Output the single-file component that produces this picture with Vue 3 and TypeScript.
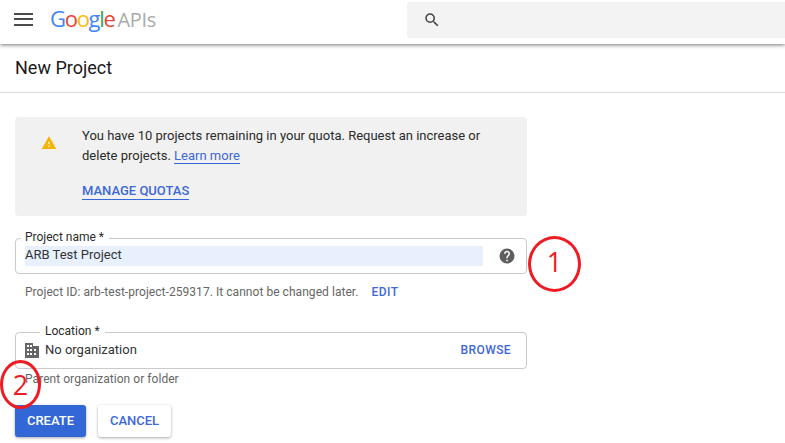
<script setup lang="ts">
const logo: { c: string; k: string }[] = [
  { c: 'G', k: 'b' }, { c: 'o', k: 'r' }, { c: 'o', k: 'y' }, { c: 'g', k: 'b' }, { c: 'l', k: 'g' }, { c: 'e', k: 'r' },
]
</script>

<template>
  <div class="page">
    <header class="topbar">
      <button class="menu" aria-label="Menu"><span></span><span></span><span></span></button>
      <div class="logo">
        <span v-for="(l, i) in logo" :key="i" :class="l.k">{{ l.c }}</span>
        <span class="apis">APIs</span>
      </div>
      <div class="search">
        <svg width="18" height="18" viewBox="0 0 24 24"><path fill="#444" d="M15.5 14h-.79l-.28-.27A6.47 6.47 0 0 0 16 9.5 6.5 6.5 0 1 0 9.5 16c1.61 0 3.09-.59 4.23-1.57l.27.28v.79l5 4.99L20.49 19l-4.99-5zm-6 0C7.01 14 5 11.99 5 9.5S7.01 5 9.5 5 14 7.01 14 9.5 11.99 14 9.5 14z"/></svg>
      </div>
    </header>

    <div class="title-row"><h1>New Project</h1></div>

    <main class="content">
      <section class="notice">
        <svg class="warn" width="16" height="16" viewBox="0 0 24 24"><path fill="#f4b400" d="M1 21h22L12 2 1 21zm12-3h-2v-2h2v2zm0-4h-2v-4h2v4z"/></svg>
        <div class="notice-body">
          <p>You have 10 projects remaining in your quota. Request an increase or delete projects. <a>Learn more</a></p>
          <a class="manage">MANAGE QUOTAS</a>
        </div>
      </section>

      <div class="field first">
        <span class="legend">Project name *</span>
        <div class="value"><span>ARB Test Project</span></div>
        <svg class="help" width="18" height="18" viewBox="0 0 24 24"><path fill="#5f5f5f" d="M12 2a10 10 0 1 0 0 20 10 10 0 0 0 0-20zm1 17h-2v-2h2v2zm2.07-7.75-.9.92C13.45 12.9 13 13.5 13 15h-2v-.5c0-1.1.45-2.1 1.17-2.83l1.24-1.26c.37-.36.59-.86.59-1.41 0-1.1-.9-2-2-2s-2 .9-2 2H8c0-2.21 1.79-4 4-4s4 1.79 4 4c0 .88-.36 1.68-.93 2.25z"/></svg>
      </div>
      <p class="hint id">Project ID: arb-test-project-259317. It cannot be changed later.<a class="edit">EDIT</a></p>

      <div class="field second">
        <span class="legend loc">Location *</span>
        <svg class="org" width="14" height="15" viewBox="0 0 14 15"><path fill="#666" fill-rule="evenodd" d="M0 0h8v3h6v12H0zM2 2v2h2V2zM5 2v2h2V2zM2 6v2h2V6zM5 6v2h2V6zM9 6v2h2V6zM2 10v2h2v-2zM5 10v2h2v-2zM9 10v2h2v-2z"/></svg>
        <span class="org-text">No organization</span>
        <a class="browse">BROWSE</a>
      </div>
      <p class="hint parent">Parent organization or folder</p>

      <div class="actions">
        <button class="btn primary">CREATE</button>
        <button class="btn secondary">CANCEL</button>
      </div>
    </main>

    <div class="mark one">1</div>
    <div class="mark two">2</div>
  </div>
</template>

<style scoped>
.page { position: relative; width: 785px; height: 443px; overflow: hidden; background: #fff; font-family: Roboto, "Liberation Sans", sans-serif; color: #202124; }
.topbar { height: 44px; display: flex; align-items: center; position: relative; box-shadow: 0 1px 4px rgba(0,0,0,.55); background: #fff; }
.menu { width: 19px; height: 13px; margin-left: 14px; margin-top: -6px; padding: 0; border: 0; background: none; display: flex; flex-direction: column; justify-content: space-between; }
.menu span { display: block; height: 2px; background: #4a4a4a; }
.logo { margin-left: 17px; width: 357px; margin-top: -7px; font: 500 22px/26px "Open Sans", sans-serif; letter-spacing: -1.3px; }
.b { color: #4285f4; } .r { color: #ea4335; } .y { color: #fbbc05; } .g { color: #34a853; }
.apis { color: #aaa; margin-left: 3px; letter-spacing: -.4px; font-size: 20px; font-weight: 400; }
.search { flex: 1; height: 36px; margin-top: -4px; background: #f3f3f3; display: flex; align-items: center; padding-left: 16px; border-radius: 2px 0 0 2px; }
.title-row { height: 48px; border-bottom: 1px solid #dcdcdc; display: flex; align-items: center; padding-left: 15px; }
h1 { margin: 0; font-size: 18px; font-weight: 400; color: #1a1a1a; margin-top: -2px; }
.content { width: 512px; margin-left: 15px; padding-top: 24px; }
.notice { height: 99px; box-sizing: border-box; background: #f1f1f1; border-radius: 4px; display: flex; padding: 9px 0 0 26px; }
.warn { margin-top: 9px; flex: none; }
.notice-body { margin-left: 25px; width: 410px; }
.notice p { margin: 0; font-size: 13px; line-height: 20px; color: #2b2b2b; }
.notice a { color: #3d68d8; border-bottom: 1px solid #3367d6; }
.manage { display: inline-block; margin-top: 17px; font-size: 13px; line-height: 16px; font-weight: 500; }
.field { position: relative; box-sizing: border-box; border: 1px solid #c9c9c9; border-radius: 4px; display: flex; align-items: center; font-size: 13px; }
.first { height: 36px; margin-top: 22px; padding-left: 9px; }
.second { height: 37px; margin-top: 32px; padding-left: 9px; }
.legend { position: absolute; top: -9px; left: 5px; background: #fff; padding: 0 5px 0 4px; font-size: 12px; line-height: 15px; color: #2b2b2b; }
.legend.loc { left: 24px; padding: 0 5px; }
.value { width: 458px; height: 20px; background: #e8f0fe; line-height: 18px; color: #333; }
.help { margin-left: 15px; }
.org { flex: none; margin-top: 0; }
.org-text { margin-left: 6px; color: #333; flex: 1; margin-top: -2px; }
.browse { margin-right: 15px; color: #3d68d8; font-size: 12px; font-weight: 500; letter-spacing: .4px; margin-top: -2px; }
.hint { margin: 0; font-size: 12px; line-height: 16px; color: #666; padding-left: 10px; letter-spacing: .05px; }
.id { margin-top: 10px; }
.parent { margin-top: 2px; }
.edit { margin-left: 13px; color: #3d68d8; font-weight: 500; letter-spacing: .5px; }
.actions { display: flex; gap: 12px; margin-top: 18px; }
.btn { height: 32px; border: 0; border-radius: 3px; font: 500 13px Roboto, sans-serif; padding: 0 0 2px; box-shadow: 0 1px 3px rgba(0,0,0,.35); }
.primary { width: 71px; background: #3367d6; color: #fff; }
.secondary { width: 73px; background: #fff; color: #3d68d8; }
.mark { position: absolute; box-sizing: border-box; border: 3px solid #ed1c24; border-radius: 50%; color: #ed1c24; display: flex; align-items: center; justify-content: center; font-family: "Open Sans", sans-serif; font-weight: 400; }
.one { left: 528px; top: 236px; width: 53px; height: 56px; font-size: 27px; padding-bottom: 6px; }
.two { left: 0; top: 360px; width: 41px; height: 49px; font-size: 27px; }
</style>
